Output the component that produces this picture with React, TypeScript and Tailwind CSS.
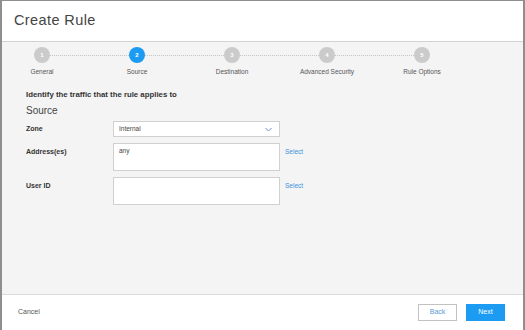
import React from 'react';

const steps = ['General', 'Source', 'Destination', 'Advanced Security', 'Rule Options'];

const font = { fontFamily: '"Liberation Sans", Arial, sans-serif' };

export default function App() {
    const active = 1;

    return (
        <div
            className="w-[525px] h-[330px] flex flex-col bg-white border-t border-l-2 border-r-2 border-[#8e8e8e] overflow-hidden"
            style={font}
        >
            {/* Header */}
            <div className="h-[41px] shrink-0 flex items-center px-[12px] border-b border-[#d2d2d2]">
                <h1 className="text-[14.5px] tracking-[0.4px] text-[#444]">Create Rule</h1>
            </div>

            {/* Body */}
            <div className="flex-1 bg-[#f4f4f4] pt-[5px]">
                {/* Stepper */}
                <div className="flex items-start pl-[32px]">
                    {steps.map((label, i) => (
                        <React.Fragment key={label}>
                            <div className="w-4 flex flex-col items-center">
                                <div
                                    className={`w-4 h-4 rounded-full flex items-center justify-center text-[6px] font-bold text-white ${
                                        i === active ? 'bg-[#1b9cf2]' : 'bg-[#cbcbcb]'
                                    }`}
                                >
                                    {i + 1}
                                </div>
                                <span className="mt-[5px] whitespace-nowrap text-[6.5px] leading-[8px] text-[#555]">
                                    {label}
                                </span>
                            </div>
                            {i < steps.length - 1 && (
                                <div className="w-[79px] h-4 flex items-center">
                                    <div className="w-full border-t border-dotted border-[#c4c4c4]" />
                                </div>
                            )}
                        </React.Fragment>
                    ))}
                </div>

                {/* Form */}
                <div className="pl-[24px] mt-[14px]">
                    <p className="text-[7.8px] leading-[10px] font-bold text-[#333]">
                        Identify the traffic that the rule applies to
                    </p>
                    <p className="mt-[4px] text-[10px] leading-[13px] text-[#444]">Source</p>

                    <div className="mt-[4px] flex flex-col gap-[6px]">
                        {/* Zone */}
                        <div className="flex items-start">
                            <span className="w-[87px] pt-[3px] text-[7px] leading-[9px] font-bold text-[#333]">Zone</span>
                            <div className="w-[167px] h-4 bg-white border border-[#d0d0d0] flex items-center justify-between pl-[5px] pr-[7px]">
                                <span className="text-[6.5px] leading-[8px] text-[#444]">Internal</span>
                                <svg width="7" height="5" viewBox="0 0 7 5" fill="none">
                                    <path d="M0.5 1l3 3 3-3" stroke="#6a95c4" strokeWidth="1" />
                                </svg>
                            </div>
                        </div>

                        {/* Address */}
                        <div className="flex items-start">
                            <span className="w-[87px] pt-[4px] text-[7px] leading-[9px] font-bold text-[#333]">Address(es)</span>
                            <div className="w-[167px] h-[28px] bg-white border border-[#d0d0d0] px-[5px] pt-[3px]">
                                <p className="text-[6.5px] leading-[8px] text-[#444]">any</p>
                            </div>
                            <a className="ml-[5px] pt-[4px] text-[6.5px] leading-[9px] text-[#3b91dc]">Select</a>
                        </div>

                        {/* User ID */}
                        <div className="flex items-start">
                            <span className="w-[87px] pt-[4px] text-[7px] leading-[9px] font-bold text-[#333]">User ID</span>
                            <div className="w-[167px] h-[28px] bg-white border border-[#d0d0d0]" />
                            <a className="ml-[5px] pt-[4px] text-[6.5px] leading-[9px] text-[#3b91dc]">Select</a>
                        </div>
                    </div>
                </div>
            </div>

            {/* Footer */}
            <div className="h-[36px] shrink-0 border-t border-[#dcdcdc] flex items-center justify-between pl-[16px] pr-[18px]">
                <span className="text-[7px] text-[#555]">Cancel</span>
                <div className="flex gap-[9px]">
                    <button className="w-[39px] h-[17px] border border-[#c2c2c2] bg-white text-[7px] text-[#5a9ad8]">
                        Back
                    </button>
                    <button className="w-[39px] h-[17px] bg-[#1b9cf2] text-[7px] text-white">Next</button>
                </div>
            </div>
        </div>
    );
}
